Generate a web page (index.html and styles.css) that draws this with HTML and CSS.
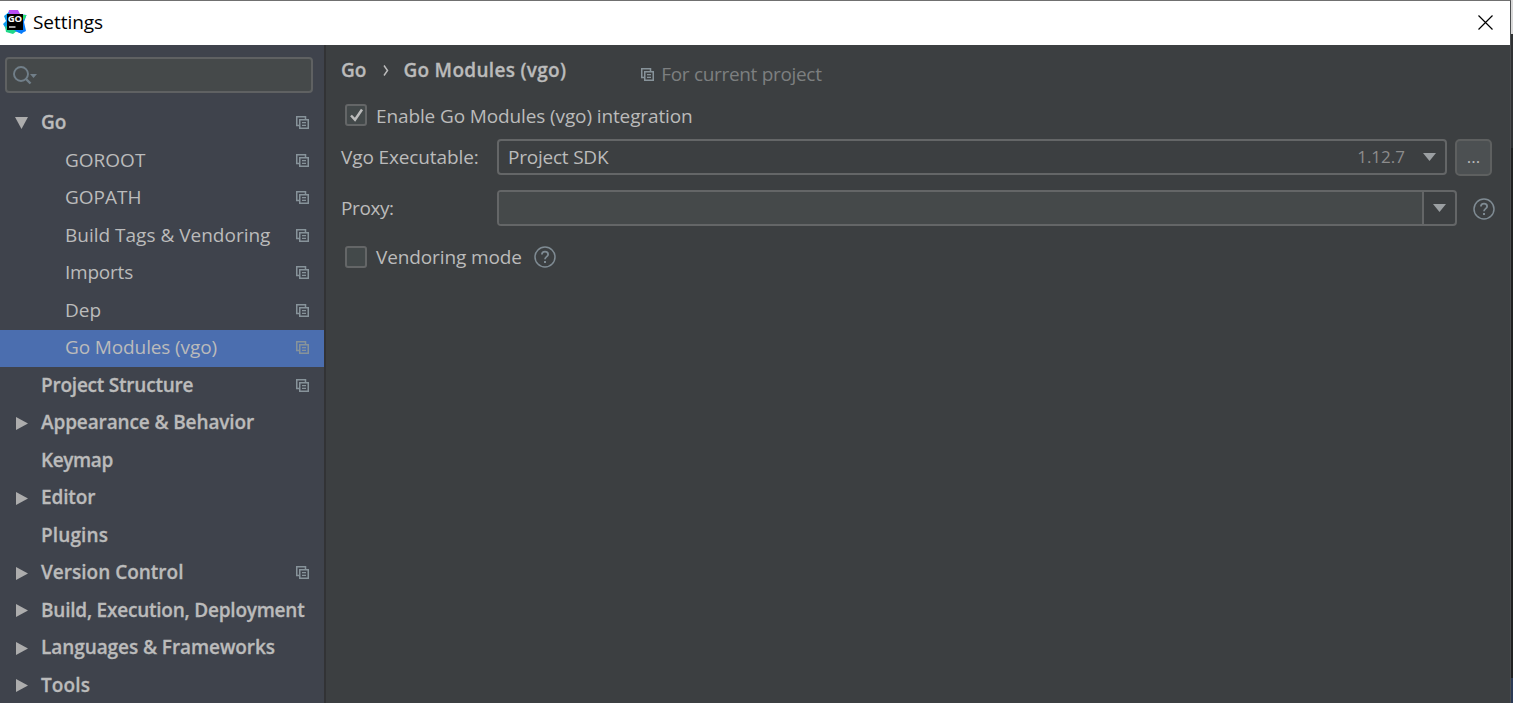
FILE: index.html
```
<!DOCTYPE html>
<html lang="en">
<head>
<meta charset="utf-8">
<title>Settings</title>
<link rel="stylesheet" href="styles.css">
</head>
<body>
<svg class="defs" width="0" height="0">
  <symbol id="copy" viewBox="0 0 13 13"><path d="M3.5 9.5H.75V.75H9.5V3.5" fill="none" stroke="currentColor" stroke-width="1.5"/><path d="M3.75 3.75h8.5v8.5h-8.5z" fill="none" stroke="currentColor" stroke-width="1.5"/><path d="M6 6.7h4M6 9.4h4" stroke="currentColor" stroke-width="1.3"/></symbol>
  <symbol id="right" viewBox="0 0 12 13"><path d="M0 0L12 6.5L0 13z" fill="currentColor"/></symbol>
  <symbol id="down" viewBox="0 0 13 12"><path d="M0 0H13L6.5 12z" fill="currentColor"/></symbol>
  <symbol id="combo" viewBox="0 0 13 8"><path d="M0 0H13L6.5 8z" fill="currentColor"/></symbol>
  <symbol id="help" viewBox="0 0 22 22"><circle cx="11" cy="11" r="10" fill="none" stroke="currentColor" stroke-width="1.5"/><path d="M7.9 8.6C7.9 6.7 9.200 5.600 11 5.600S14.100 6.800 14.100 8.400C14.100 10.600 11 10.700 11 13.300" fill="none" stroke="currentColor" stroke-width="1.8"/><path d="M10 15h2v2h-2z" fill="currentColor"/></symbol>
</svg>
<div class="screen">
  <div class="window">
    <header class="titlebar">
      <svg class="logo" width="24" height="24" viewBox="0 0 24 24">
        <path d="M6 0H15L17 4L10 13L4 8z" fill="#b84cf5"/>
        <path d="M16 4L23.500 5L21 12L23 21L18 23.500L9 20z" fill="#087cfa"/>
        <path d="M15 5L23.500 5L21 10z" fill="#2de56f"/>
        <path d="M6 2L1 6L3 11L0 14L3 19L10 15z" fill="#0b9bee"/>
        <path d="M2 16L3 22L10 24L15 20L5 17z" fill="#21d789"/>
        <path d="M11 20L19 24L21 18z" fill="#087cfa"/>
        <path d="M4 4H20V20H4z" fill="#000"/>
        <path d="M6 17H12.500" stroke="#fff" stroke-width="1.300"/>
        <text class="logo-text" x="4.700" y="11.500" textLength="14.500" lengthAdjust="spacingAndGlyphs">GO</text>
      </svg>
      <span class="title">Settings</span>
      <svg class="close" width="15" height="15" viewBox="0 0 15 15"><path d="M.5 .5L14.500 14.500M14.500 .5L.5 14.500" stroke="#000" stroke-width="1.200"/></svg>
    </header>
    <div class="body">
      <aside class="sidebar">
        <div class="search">
          <svg width="25" height="19" viewBox="0 0 25 19"><circle cx="8" cy="8" r="7" fill="none" stroke="#717f89" stroke-width="1.900"/><path d="M12.500 12.500L17.500 17.500" stroke="#717f89" stroke-width="2.400"/><path d="M17 8H24L20.500 12z" fill="#717f89"/></svg>
        </div>
        <nav class="tree">
          <div class="row group"><svg class="arrow" width="13" height="12"><use href="#down"/></svg><span class="label">Go</span><svg class="copy" width="13" height="13"><use href="#copy"/></svg></div>
          <div class="row child"><span class="label">GOROOT</span><svg class="copy" width="13" height="13"><use href="#copy"/></svg></div>
          <div class="row child"><span class="label">GOPATH</span><svg class="copy" width="13" height="13"><use href="#copy"/></svg></div>
          <div class="row child"><span class="label">Build Tags &amp; Vendoring</span><svg class="copy" width="13" height="13"><use href="#copy"/></svg></div>
          <div class="row child"><span class="label tighter">Imports</span><svg class="copy" width="13" height="13"><use href="#copy"/></svg></div>
          <div class="row child"><span class="label">Dep</span><svg class="copy" width="13" height="13"><use href="#copy"/></svg></div>
          <div class="row child selected"><span class="label tight">Go Modules (vgo)</span><svg class="copy" width="13" height="13"><use href="#copy"/></svg></div>
          <div class="row group"><span class="arrow"></span><span class="label tighter">Project Structure</span><svg class="copy" width="13" height="13"><use href="#copy"/></svg></div>
          <div class="row group"><svg class="arrow" width="12" height="13"><use href="#right"/></svg><span class="label tight">Appearance &amp; Behavior</span></div>
          <div class="row group"><span class="arrow"></span><span class="label tightest">Keymap</span></div>
          <div class="row group"><svg class="arrow" width="12" height="13"><use href="#right"/></svg><span class="label tight">Editor</span></div>
          <div class="row group"><span class="arrow"></span><span class="label loose">Plugins</span></div>
          <div class="row group"><svg class="arrow" width="12" height="13"><use href="#right"/></svg><span class="label">Version Control</span><svg class="copy" width="13" height="13"><use href="#copy"/></svg></div>
          <div class="row group"><svg class="arrow" width="12" height="13"><use href="#right"/></svg><span class="label tighter">Build, Execution, Deployment</span></div>
          <div class="row group"><svg class="arrow" width="12" height="13"><use href="#right"/></svg><span class="label snug">Languages &amp; Frameworks</span></div>
          <div class="row group"><svg class="arrow" width="12" height="13"><use href="#right"/></svg><span class="label loose">Tools</span></div>
        </nav>
      </aside>
      <main class="content">
        <div class="crumbs">
          <span class="crumb">Go</span>
          <svg class="chevron" width="6" height="11" viewBox="0 0 6 11"><path d="M1 .5L4.500 5.500L1 10.500" fill="none" stroke="#bbb" stroke-width="1.500"/></svg>
          <span class="crumb page">Go Modules (vgo)</span>
          <span class="scope"><svg class="copy" width="13" height="13"><use href="#copy"/></svg><span class="scope-text">For current project</span></span>
        </div>
        <div class="check-row">
          <span class="checkbox"><svg width="15" height="15" viewBox="0 0 15 15"><path d="M2 7.500L6 11.700L13 1.500" fill="none" stroke="#bbb" stroke-width="2.500"/></svg></span>
          <span class="enable">Enable Go Modules (vgo) integration</span>
        </div>
        <div class="field-row sdk">
          <span class="field-label tight">Vgo Executable:</span>
          <div class="select"><span class="tighter">Project SDK</span><span class="version">1.12.7</span><svg width="13" height="8"><use href="#combo"/></svg></div>
          <button class="browse">...</button>
        </div>
        <div class="field-row proxy">
          <span class="field-label tightest">Proxy:</span>
          <div class="combo"><span class="combo-input"></span><span class="combo-button"><svg width="13" height="8"><use href="#combo"/></svg></span></div>
          <svg class="help" width="22" height="22"><use href="#help"/></svg>
        </div>
        <div class="check-row vendoring">
          <span class="checkbox"></span><span class="tight">Vendoring mode</span>
          <svg class="help" width="22" height="22"><use href="#help"/></svg>
        </div>
      </main>
    </div>
  </div>
  <div class="backdrop"><i class="b-light"></i><i class="b-grey"></i><i class="b-dark"></i><i class="b-blue"></i></div>
</div>
</body>
</html>
```
FILE: styles.css
```
* { box-sizing: border-box; }
body { margin: 0; overflow: hidden; font: 19px/26px "Open Sans", "Noto Sans", sans-serif; color: #bbbbbb; }
svg { display: block; flex: none; }
.defs { position: absolute; }
.screen { display: flex; width: 1513px; height: 703px; }
.window { width: 1511px; display: flex; flex-direction: column; border-top: 1px solid #707070; border-right: 1px solid #4b4d4f; background: #3c3f41; }
.titlebar { height: 44px; flex: none; display: flex; align-items: center; background: #fff; color: #000; padding: 0 17px 0 4px; }
.logo { margin-top: -3px; margin-left: -1px; }
.logo-text { font: 700 9.5px "Open Sans", sans-serif; fill: #fff; }
.title { margin-left: 6px; letter-spacing: -.05px; margin-top: -2px; }
.close { margin-left: auto; margin-top: -1px; }
.body { flex: 1; display: flex; min-height: 0; }
.sidebar { width: 324px; flex: none; background: #3f434c; overflow: hidden; }
.search { margin: 12px 11px 11.75px 5px; height: 36px; border: 2px solid #5f6162; border-radius: 4px; background: #45494a; padding: 7px 0 0 6px; }
.tree { display: flex; flex-direction: column; }
.row { height: 37.5px; flex: none; display: flex; align-items: center; padding: 0 14px 1px 16px; white-space: nowrap; }
.row .label { margin-top: -1.5px; }
.group, .crumb { font-weight: 600; -webkit-text-stroke: .3px currentColor; }
.child { padding-left: 65px; }
.arrow { width: 12px; margin-right: 13px; color: #adadad; }
.row:first-child .arrow { width: 13px; margin: 0 13px 0 -1px; }
.row .copy { margin: -1px 1px 0 auto; }
.copy { color: #87939a; }
.selected { background: #4b6eaf; }
.loose { letter-spacing: .12px; }
.snug { letter-spacing: -.07px; }
.tight { letter-spacing: -.12px; }
.tighter { letter-spacing: -.22px; }
.tightest { letter-spacing: -.4px; }
.content { flex: 1; border-left: 2px solid #323335; padding: 12px 15px 0; }
.crumbs { display: flex; align-items: center; height: 26px; }
.chevron { margin: 0 14px 0 17px; }
.page { letter-spacing: .3px; }
.scope { display: flex; align-items: center; gap: 7px; margin: 8px 0 0 75px; color: #7d7f80; }
.scope-text { letter-spacing: -.32px; }
.check-row { display: flex; align-items: center; height: 26px; margin-top: 19px; padding-left: 4px; }
.checkbox { width: 22px; height: 22px; border: 2px solid #646667; border-radius: 3px; background: #43494a; margin-right: 9px; display: grid; place-items: center; }
.enable { letter-spacing: -.12px; margin-top: 1px; }
.field-row { display: flex; align-items: center; height: 36px; }
.field-label { width: 156px; flex: none; margin-top: -1px; }
.sdk { margin-top: 11px; }
.select { width: 950px; height: 36px; display: flex; align-items: center; border: 2px solid #646667; border-radius: 4px; padding: 0 9px; line-height: 30px; color: #bbb; }
.select span { margin-top: -1px; }
.select svg { margin-left: 18px; color: #9b9fa2; }
.version { margin-left: auto; font-size: 17px; color: #8c8c8c; }
.browse { width: 37px; height: 37px; margin-left: 8px; padding: 0; border: 2px solid #5e6060; border-radius: 5px; background: #4c5052; color: #bbb; font: 17px/30px "Open Sans", sans-serif; flex: none; }
.proxy { margin-top: 15px; }
.combo { display: flex; width: 960px; height: 36px; border: 2px solid #646667; border-radius: 4px; overflow: hidden; }
.combo-input { flex: 1; background: #45494a; }
.combo-button { width: 33px; border-left: 2px solid #646667; display: grid; place-items: center; color: #9b9fa2; }
.help { color: #7f8b93; }
.proxy .help { margin: 1px 0 0 16px; }
.vendoring { margin-top: 18px; }
.vendoring .help { margin-left: 12px; }
.backdrop { width: 2px; display: flex; flex-direction: column; }
.b-light { height: 34px; background: #d9d9d9; }
.b-grey { height: 114px; background: #2f3133; }
.b-dark { flex: 1; background: #202122; }
.b-blue { height: 25px; background: #2b3a55; }
```
